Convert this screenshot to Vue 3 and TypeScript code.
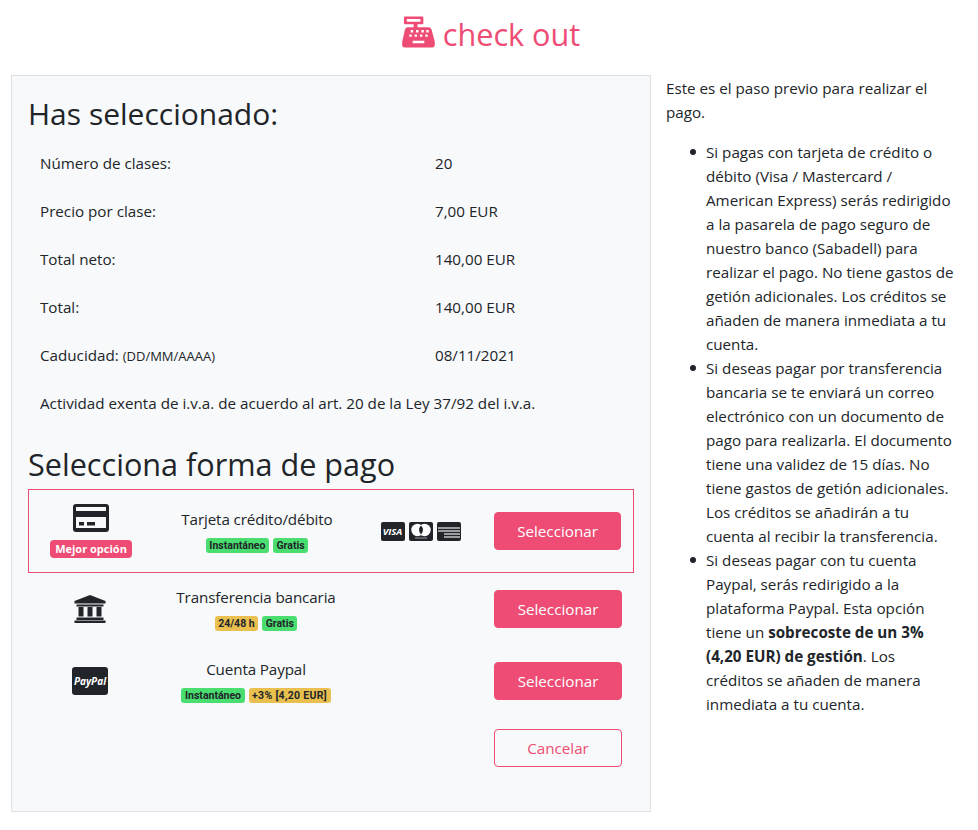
<script setup lang="ts">
interface Summary { label: string; note?: string; value: string }
const summary: Summary[] = [
  { label: 'Número de clases:', value: '20' },
  { label: 'Precio por clase:', value: '7,00 EUR' },
  { label: 'Total neto:', value: '140,00 EUR' },
  { label: 'Total:', value: '140,00 EUR' },
  { label: 'Caducidad:', note: '(DD/MM/AAAA)', value: '08/11/2021' },
]
</script>

<template>
  <div class="page">
    <h1 class="title">
      <svg class="register" viewBox="0 0 34 32" width="33" height="32" aria-hidden="true">
        <path fill="#ee4c74" fill-rule="evenodd" d="M3 0h18a1 1 0 0 1 1 1v6a1 1 0 0 1-1 1h-5v3h11.500c1.500 0 2.600 1 2.900 2.400L33.800 26v3.500c0 1.400-1.100 2.500-2.500 2.500H2.700C1.300 32 .2 30.900.2 29.500V26L3.100 13.400C3.400 12 4.500 11 6 11h6V8H3a1 1 0 0 1-1-1V1a1 1 0 0 1 1-1zM5 2.500V5.500h14V2.500zM9 14v2.500h2.500V14zM14.500 14v2.500H17V14zM20 14v2.500h2.500V14zM25 14v2.500h2.500V14zM7.500 18.500V21H10v-2.500zM13 18.500V21h2.500v-2.500zM18.500 18.500V21H21v-2.500zM24 18.500V21h2.500v-2.500zM11 25v2.500h12V25z"/>
      </svg>
      <span>check out</span>
    </h1>

    <div class="columns">
      <main class="panel">
        <h2 class="heading first">Has seleccionado:</h2>
        <div v-for="row in summary" :key="row.label" class="sum-row">
          <div>{{ row.label }} <small v-if="row.note">{{ row.note }}</small></div>
          <div>{{ row.value }}</div>
        </div>
        <p class="exempt">Actividad exenta de i.v.a. de acuerdo al art. 20 de la Ley 37/92 del i.v.a.</p>

        <h2 class="heading second">Selecciona forma de pago</h2>

        <div class="pay-row best">
          <div class="pay-icon">
            <svg viewBox="0 0 36 28" width="36" height="28" aria-hidden="true">
              <path fill="#212529" fill-rule="evenodd" d="M3 0h30a3 3 0 0 1 3 3v22a3 3 0 0 1-3 3H3a3 3 0 0 1-3-3V3a3 3 0 0 1 3-3zM3 3v4h30V3zM3 13v11h30V13zM6 18h5v3.500H6zM14 18h8v3.500h-8z"/>
            </svg>
            <span class="badge pink">Mejor opción</span>
          </div>
          <div class="pay-text">
            <div class="name">Tarjeta crédito/débito</div>
            <div class="badges"><span class="badge green">Instantáneo</span><span class="badge green">Gratis</span></div>
          </div>
          <div class="brands">
            <span class="brand visa">VISA</span>
            <span class="brand mc">
              <svg viewBox="0 0 24 19" width="24" height="19" aria-hidden="true">
                <circle cx="8.500" cy="8" r="6.200" fill="#fff"/>
                <circle cx="15.500" cy="8" r="6.200" fill="#fff"/>
                <path d="M12 3.500a6.200 6.200 0 0 1 0 9a6.200 6.200 0 0 1 0-9z" fill="#212529"/>
                <path d="M6 16h12" stroke="#9a9da0" stroke-width="1"/>
              </svg>
            </span>
            <span class="brand amex">
              <svg viewBox="0 0 24 19" width="24" height="19" aria-hidden="true">
                <path d="M1 6h22M1 9h22M7 12h16M7 15h16" stroke="#9a9da0" stroke-width="1.800"/>
              </svg>
            </span>
          </div>
          <div class="pay-action"><button class="btn solid">Seleccionar</button></div>
        </div>

        <div class="pay-row plain">
          <div class="pay-icon">
            <svg viewBox="0 0 32 28" width="32" height="28" aria-hidden="true">
              <path fill="#212529" d="M16 0l15.500 6V8.500H.5V6zM2.500 9.500h27v2h-27zM4.500 12h5v9.500h-5zM13.500 12h5v9.500h-5zM22.500 12h5v9.500h-5zM2.500 22.500h27V25h-27zM.5 25.500h31V28H.5z"/>
            </svg>
          </div>
          <div class="pay-text">
            <div class="name">Transferencia bancaria</div>
            <div class="badges"><span class="badge yellow">24/48 h</span><span class="badge green">Gratis</span></div>
          </div>
          <div></div>
          <div class="pay-action"><button class="btn solid">Seleccionar</button></div>
        </div>

        <div class="pay-row plain">
          <div class="pay-icon"><span class="paypal">PayPal</span></div>
          <div class="pay-text">
            <div class="name">Cuenta Paypal</div>
            <div class="badges"><span class="badge green">Instantáneo</span><span class="badge yellow wide">+3% [4,20 EUR]</span></div>
          </div>
          <div></div>
          <div class="pay-action"><button class="btn solid">Seleccionar</button></div>
        </div>

        <div class="cancel-row"><button class="btn outline">Cancelar</button></div>
      </main>

      <aside class="info">
        <p>Este es el paso previo para realizar el pago.</p>
        <ul>
          <li>Si pagas con tarjeta de crédito o débito (Visa / Mastercard / American Express) serás redirigido a la pasarela de pago seguro de nuestro banco (Sabadell) para realizar el pago. No tiene gastos de getión adicionales. Los créditos se añaden de manera inmediata a tu cuenta.</li>
          <li>Si deseas pagar por transferencia bancaria se te enviará un correo electrónico con un documento de pago para realizarla. El documento tiene una validez de 15 días. No tiene gastos de getión adicionales. Los créditos se añadirán a tu cuenta al recibir la transferencia.</li>
          <li>Si deseas pagar con tu cuenta Paypal, serás redirigido a la plataforma Paypal. Esta opción tiene un <strong>sobrecoste de un 3% (4,20 EUR) de gestión</strong>. Los créditos se añaden de manera inmediata a tu cuenta.</li>
        </ul>
      </aside>
    </div>
  </div>
</template>

<style scoped>
.page {
  width: 960px;
  margin-left: 11px;
  font-family: "Open Sans", "Noto Sans", sans-serif;
  font-size: 15.2px;
  line-height: 24px;
  color: #212529;
}
.title {
  margin: 0;
  height: 67px;
  padding-bottom: 8px;
  display: flex;
  align-items: center;
  justify-content: center;
  gap: 8px;
  font-size: 30.6px;
  font-weight: 400;
  color: #ee4c74;
}
.register { margin-bottom: 4px; }
.columns {
  display: flex;
  align-items: flex-start;
}
.panel {
  box-sizing: border-box;
  width: 640px;
  height: 737px;
  background: #f8f9fa;
  border: 1px solid #dee2e6;
  padding: 19px 16px 16px;
}
.heading {
  margin: 0;
  line-height: 38px;
  font-weight: 400;
}
.first { font-size: 30px; margin-bottom: 6px; }
.sum-row {
  display: grid;
  grid-template-columns: 395px 1fr;
  height: 48px;
  box-sizing: border-box;
  padding: 12px;
}
small { font-size: 13px; line-height: 1; }
.exempt { margin: 0; padding: 12px; }
.second { font-size: 30.6px; margin-top: 18px; margin-bottom: 6px; }
.pay-row {
  display: grid;
  grid-template-columns: 124px 208px 122px 1fr;
  align-items: center;
  box-sizing: border-box;
}
.best {
  grid-template-columns: 124px 208px 121px 1fr;
  border: 1px solid #ee4c74;
  height: 84px;
}
.plain { height: 72px; }
.pay-icon {
  display: flex;
  flex-direction: column;
  align-items: center;
  gap: 8px;
}
.pay-text { text-align: center; margin-top: -1px; }
.name { letter-spacing: -0.12px; }
.badges {
  display: flex;
  justify-content: center;
  gap: 4px;
  margin-top: 7px;
  height: 16px;
}
.badge {
  font-family: Roboto, "Open Sans", sans-serif;
  font-size: 10.5px;
  line-height: 15px;
  height: 15px;
  font-weight: 700;
  padding: 0 3.5px;
  border-radius: 3px;
  color: #212529;
}
.pink {
  font-family: "Open Sans", sans-serif;
  background: #ee4c74;
  color: #fff;
  font-size: 11px;
  line-height: 18px;
  height: 18px;
  padding: 0 5.5px;
  border-radius: 4px;
}
.green { background: #4ade70; }
.yellow { background: #e9bf4f; }
.wide { letter-spacing: 0.3px; }
.brands { display: flex; justify-content: center; gap: 4px; margin-right: 2px; }
.brand {
  width: 24px;
  height: 19px;
  background: #212529;
  border-radius: 2px;
  overflow: hidden;
  display: flex;
}
.visa {
  color: #fff;
  font-size: 9.5px;
  font-style: italic;
  font-weight: 700;
  line-height: 19px;
  justify-content: center;
}
.pay-action { padding: 0 12px; }
.btn {
  box-sizing: border-box;
  width: 100%;
  height: 38px;
  font: inherit;
  border-radius: 4px;
  border: 1px solid #ee4c74;
  cursor: pointer;
}
.solid { background: #ee4c74; color: #fff; }
.outline { background: transparent; color: #ee4c74; width: 128px; }
.paypal {
  width: 36px;
  height: 28px;
  background: #212529;
  color: #fff;
  border-radius: 3px;
  font-size: 10px;
  line-height: 28px;
  font-style: italic;
  font-weight: 700;
  text-align: center;
}
.cancel-row { display: flex; justify-content: flex-end; padding-right: 12px; margin-top: 12px; }
.info { width: 289px; margin-left: 15px; }
.info p { margin: 1px 0 16px; }
.info ul { margin: 0; padding-left: 40px; list-style: none; }
.info li { position: relative; }
.info li::before {
  content: "";
  position: absolute;
  left: -16px;
  top: 9px;
  width: 6px;
  height: 6px;
  border-radius: 50%;
  background: #212529;
}
</style>
